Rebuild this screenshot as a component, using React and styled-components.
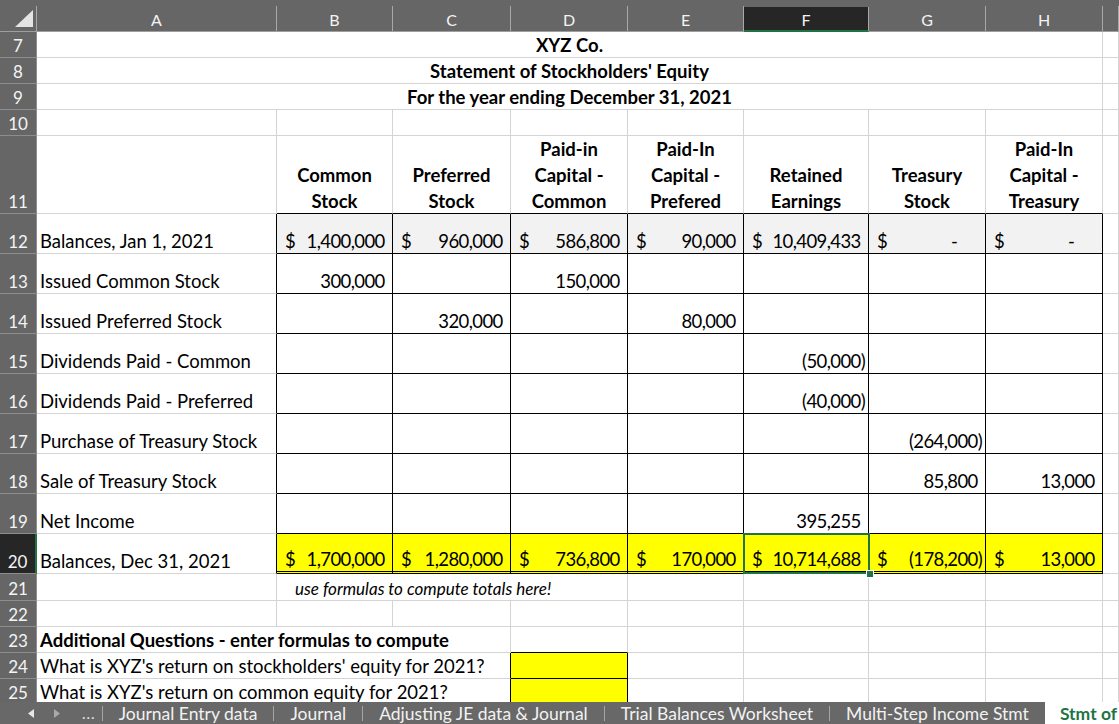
import React from "react";
import styled, { createGlobalStyle, css } from "styled-components";

const GRID = "#d4d4d4";
const INK = "#000";
const HEAD = "#666666";
const HEAD_ON = "#262626";
const GREEN = "#217346";
const COLS = "37px 240px 116px 118px 117px 116px 125px 117px 117px 1fr";

const GlobalStyle = createGlobalStyle`
  html, body { margin: 0; padding: 0; background: #fff; }
  body { font-family: Lato, "Open Sans", sans-serif; }
`;

const Page = styled.div`
  width: 1119px;
  height: 724px;
  display: flex;
  flex-direction: column;
  overflow: hidden;
  background: #fff;
`;

const Sheet = styled.div`
  flex: 1;
  min-height: 0;
  overflow: hidden;
  display: grid;
  grid-template-columns: ${COLS};
  grid-template-rows: 32px 26px 26px 26px 26px 78px repeat(9, 40px) 27px 26px 26px 26px 26px;
  font-size: 18.5px;
  color: #000;
`;

const Corner = styled.div`
  background: ${HEAD};
  display: flex;
  align-items: flex-end;
  border-bottom: 1px solid #9e9e9e;
`;

const CornerInner = styled.div`
  height: 25px;
  width: 100%;
  border-right: 1px solid #a8a8a8;
  display: flex;
`;

const ColHead = styled.div`
  background: ${HEAD};
  display: flex;
  align-items: flex-end;
  border-bottom: 1px solid #9e9e9e;
`;

const ColLabel = styled.div`
  height: 25px;
  width: 100%;
  box-sizing: border-box;
  display: flex;
  align-items: center;
  justify-content: center;
  padding-top: 2px;
  font-size: 16px;
  color: #f4f4f4;
  border-right: 1px solid #a8a8a8;
  ${(p) =>
    p.$active &&
    css`
      background: ${HEAD_ON};
      border-bottom: 2px solid ${GREEN};
      margin-bottom: -1px;
    `}
`;

const RowHead = styled.div`
  background: ${(p) => (p.$active ? HEAD_ON : HEAD)};
  color: #f4f4f4;
  font-size: 17px;
  line-height: 21px;
  display: flex;
  align-items: flex-end;
  justify-content: center;
  padding-bottom: 1px;
  box-sizing: border-box;
  border-bottom: 1px solid #8d8d8d;
  border-right: ${(p) => (p.$active ? `2px solid ${GREEN}` : "1px solid #8d8d8d")};
`;

const Cell = styled.div`
  grid-column: span ${(p) => p.$span || 1};
  min-width: 0;
  box-sizing: border-box;
  display: flex;
  align-items: flex-end;
  justify-content: ${(p) =>
    p.$align === "center" ? "center" : p.$align === "right" ? "flex-end" : "flex-start"};
  padding: 0 3px 1px ${(p) => p.$indent ?? 3}px;
  line-height: 21px;
  white-space: nowrap;
  background: ${(p) => p.$fill || "#fff"};
  border-right: 1px solid ${(p) => p.$rb || GRID};
  border-bottom: ${(p) => (p.$bb === "double" ? `3px double ${INK}` : `1px solid ${p.$bb || GRID}`)};
  font-weight: ${(p) => (p.$bold ? 700 : 400)};
  font-style: ${(p) => (p.$italic ? "italic" : "normal")};
  font-size: ${(p) => (p.$small ? "17px" : "inherit")};
  ${(p) =>
    p.$selected &&
    css`
      position: relative;
      &::before {
        content: "";
        position: absolute;
        left: -1px;
        top: -1px;
        right: -2px;
        bottom: -3px;
        border: 2px solid ${GREEN};
        z-index: 2;
      }
      &::after {
        content: "";
        position: absolute;
        right: -6px;
        bottom: -7px;
        width: 6px;
        height: 6px;
        background: ${GREEN};
        border: 1px solid #fff;
        z-index: 3;
      }
    `}
`;

const HeadText = styled.div`
  text-align: center;
  line-height: 26px;
  font-weight: 700;
  margin-bottom: -2px;
`;

const Acct = styled.div`
  flex: 1;
  display: flex;
  justify-content: space-between;
`;

const Figure = styled.span`
  letter-spacing: -0.6px;
`;

const Ghost = styled.span`
  visibility: hidden;
`;

const TabBar = styled.div`
  flex: none;
  height: 22px;
  background: #686868;
  display: flex;
  align-items: center;
  color: #f2f2f2;
  font-size: 17.5px;
  white-space: nowrap;
  overflow: hidden;
`;

const Nav = styled.span`
  flex: none;
  width: 26px;
  display: flex;
  justify-content: center;
  align-items: center;
`;

const Dots = styled.span`
  flex: none;
  color: #e6e6e6;
  font-size: 15px;
  padding: 0 6px 0 12px;
  letter-spacing: 1px;
`;

const TabSep = styled.span`
  flex: none;
  width: 1px;
  height: 15px;
  background: #a4a4a4;
`;

const Tab = styled.div`
  flex: none;
  padding: 0 16px;
  height: 22px;
  display: flex;
  align-items: center;
  ${(p) =>
    p.$active &&
    css`
      background: #fff;
      color: ${GREEN};
      font-weight: 700;
      padding: 0 8px 0 15px;
    `}
`;

const Arrow = ({ dir, color }) => (
  <svg width="6" height="9" viewBox="0 0 6 9">
    <polygon points={dir === "left" ? "6,0 6,9 0,4.5" : "0,0 0,9 6,4.5"} fill={color} />
  </svg>
);

const money = (v, dollar) => {
  let num;
  if (v === 0) {
    num = (
      <Figure>
        -<Ghost>00)</Ghost>
      </Figure>
    );
  } else if (v < 0) {
    num = <Figure>({Math.abs(v).toLocaleString("en-US")})</Figure>;
  } else {
    num = (
      <Figure>
        {v.toLocaleString("en-US")}
        <Ghost>)</Ghost>
      </Figure>
    );
  }
  return (
    <Acct>
      <span>{dollar ? <><Ghost>(</Ghost>$</> : null}</span>
      {num}
    </Acct>
  );
};

const HEADERS = [
  ["Common", "Stock"],
  ["Preferred", "Stock"],
  ["Paid-in", "Capital -", "Common"],
  ["Paid-In", "Capital -", "Prefered"],
  ["Retained", "Earnings"],
  ["Treasury", "Stock"],
  ["Paid-In", "Capital -", "Treasury"],
];

const BODY = [
  [12, "Balances, Jan 1, 2021", [1400000, 960000, 586800, 90000, 10409433, 0, 0], "open"],
  [13, "Issued Common Stock", [300000, null, 150000, null, null, null, null]],
  [14, "Issued Preferred Stock", [null, 320000, null, 80000, null, null, null]],
  [15, "Dividends Paid - Common", [null, null, null, null, -50000, null, null]],
  [16, "Dividends Paid - Preferred", [null, null, null, null, -40000, null, null]],
  [17, "Purchase of Treasury Stock", [null, null, null, null, null, -264000, null]],
  [18, "Sale of Treasury Stock", [null, null, null, null, null, 85800, 13000]],
  [19, "Net Income", [null, null, null, null, 395255, null, null]],
  [20, "Balances, Dec 31, 2021", [1700000, 1280000, 736800, 170000, 10714688, -178200, 13000], "close"],
];

const COL_LETTERS = ["A", "B", "C", "D", "E", "F", "G", "H", ""];

const TABS = [
  "Journal Entry data",
  "Journal",
  "Adjusting JE data & Journal",
  "Trial Balances Worksheet",
  "Multi-Step Income Stmt",
];

const Empty = ({ n = 1, ...rest }) =>
  Array.from({ length: n }, (_, i) => <Cell key={i} {...rest} />);

export default function App() {
  const titleRow = (n, text) => (
    <React.Fragment key={n}>
      <RowHead>{n}</RowHead>
      <Cell $span={8} $align="center" $bold>
        {text}
      </Cell>
      <Cell />
    </React.Fragment>
  );

  return (
    <Page>
      <GlobalStyle />
      <Sheet>
        <Corner>
          <CornerInner>
            <svg width="36" height="25" viewBox="0 0 36 25">
              <polygon points="15,21 33,21 33,4" fill="#e4e4e4" />
            </svg>
          </CornerInner>
        </Corner>
        {COL_LETTERS.map((c, i) => (
          <ColHead key={i}>
            <ColLabel $active={c === "F"}>{c}</ColLabel>
          </ColHead>
        ))}

        {titleRow(7, "XYZ Co.")}
        {titleRow(8, "Statement of Stockholders' Equity")}
        {titleRow(9, "For the year ending December 31, 2021")}

        <RowHead>10</RowHead>
        <Empty n={9} />

        <RowHead>11</RowHead>
        <Cell />
        {HEADERS.map((lines, i) => (
          <Cell key={i} $align="center" $bb={INK}>
            <HeadText>
              {lines.map((l, j) => (
                <div key={j}>{l}</div>
              ))}
            </HeadText>
          </Cell>
        ))}
        <Cell />

        {BODY.map(([n, label, vals, kind]) => (
          <React.Fragment key={n}>
            <RowHead $active={n === 20}>{n}</RowHead>
            <Cell $rb={INK}>{label}</Cell>
            {vals.map((v, i) => (
              <Cell
                key={i}
                $rb={INK}
                $bb={kind === "close" ? "double" : INK}
                $fill={kind === "open" ? "#f2f2f2" : kind === "close" ? "#ffff00" : undefined}
                $selected={kind === "close" && i === 4}
              >
                {v === null ? null : money(v, !!kind)}
              </Cell>
            ))}
            <Cell />
          </React.Fragment>
        ))}

        <RowHead>21</RowHead>
        <Cell />
        <Cell $span={3} $italic $small $indent={18}>
          use formulas to compute totals here!
        </Cell>
        <Empty n={5} />

        <RowHead>22</RowHead>
        <Empty n={9} />

        <RowHead>23</RowHead>
        <Cell $span={3} $bold>
          Additional Questions - enter formulas to compute
        </Cell>
        <Cell $bb={INK} />
        <Empty n={5} />

        <RowHead>24</RowHead>
        <Cell $span={3} $rb={INK}>
          What is XYZ's return on stockholders' equity for 2021?
        </Cell>
        <Cell $rb={INK} $bb={INK} $fill="#ffff00" />
        <Empty n={5} />

        <RowHead>25</RowHead>
        <Cell $span={3} $rb={INK}>
          What is XYZ's return on common equity for 2021?
        </Cell>
        <Cell $rb={INK} $bb={INK} $fill="#ffff00" />
        <Empty n={5} />
      </Sheet>

      <TabBar>
        <Nav style={{ marginLeft: 18 }}>
          <Arrow dir="left" color="#e6e6e6" />
        </Nav>
        <Nav>
          <Arrow dir="right" color="#a9a9a9" />
        </Nav>
        <Dots>...</Dots>
        {TABS.map((t) => (
          <React.Fragment key={t}>
            <TabSep />
            <Tab>{t}</Tab>
          </React.Fragment>
        ))}
        <Tab $active>Stmt of</Tab>
      </TabBar>
    </Page>
  );
}
